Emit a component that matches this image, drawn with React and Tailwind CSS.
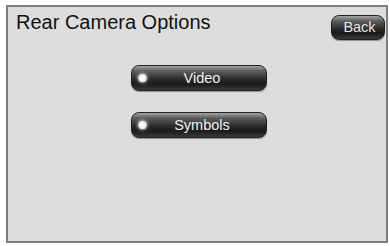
export default function App() {
  const options = ["Video", "Symbols"];

  return (
    <div className="w-[390px] h-[246px] bg-white pt-[5px] pl-[6px] font-['Liberation_Sans',Arial,sans-serif]">
      <div className="w-[382px] h-[238px] border-2 border-[#7c7c7c] bg-[#dddddd] flex flex-col">
        {/* Header */}
        <div className="flex items-start justify-between">
          <h1 className="pt-[4px] pl-[8px] text-[20px] leading-[23px] text-[#111]">Rear Camera Options</h1>
          <button className="mt-[8px] mr-[1px] w-[54px] h-[25px] rounded-[8px] border border-[#222] bg-[linear-gradient(to_bottom,#a4a4a4_0%,#5e5e5e_22%,#2a2a2a_55%,#1a1a1a_75%,#3a3a3a_100%)] shadow-[0_1px_1px_rgba(0,0,0,0.35)] text-[14.5px] leading-none text-[#e2e2e2] pl-[3px]">
            Back
          </button>
        </div>

        {/* Option buttons */}
        <div className="mt-[25px] ml-[123px] flex flex-col gap-[21px]">
          {options.map((label) => (
            <button
              key={label}
              className="relative w-[136px] h-[26px] rounded-[8px] border border-[#222] bg-[linear-gradient(to_bottom,#a4a4a4_0%,#5e5e5e_20%,#2a2a2a_55%,#1a1a1a_75%,#3a3a3a_100%)] shadow-[0_1px_1px_rgba(0,0,0,0.35)] flex items-center justify-center text-[14.5px] leading-none text-[#efefef]"
            >
              <span className="absolute left-[6px] top-1/2 -translate-y-1/2 w-[9px] h-[9px] rounded-full bg-[radial-gradient(circle,#ffffff_0%,#f2f2f2_45%,#9a9a9a_100%)] shadow-[0_0_3px_1px_rgba(255,255,255,0.45)]"></span>
              <span className="pl-[6px]">{label}</span>
            </button>
          ))}
        </div>
      </div>
    </div>
  );
}
